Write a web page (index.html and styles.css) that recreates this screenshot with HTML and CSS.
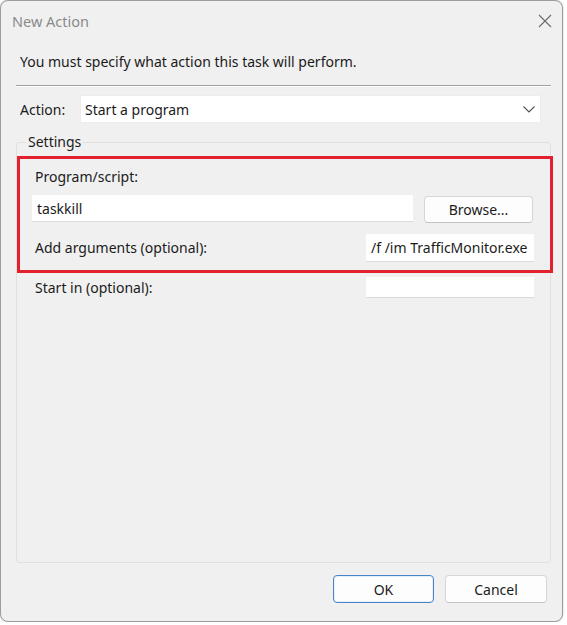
FILE: index.html
```html
<!DOCTYPE html>
<html>
<head>
    <title>New Action</title>
    <link rel="stylesheet" href="styles.css">
</head>
<body>
    <div class="window">
        <div class="titlebar">
            <span class="title">New Action</span>
            <svg class="close" width="14" height="14" viewBox="0 0 14 14">
                <path d="M1 1 L13 13 M13 1 L1 13" stroke="#6a6a6a" stroke-width="1.1" fill="none"/>
            </svg>
        </div>

        <div class="content">
            <div class="instruction">You must specify what action this task will perform.</div>
            <div class="separator"></div>

            <div class="action-row">
                <span class="action-label">Action:</span>
                <div class="combo">
                    <span>Start a program</span>
                    <svg width="12" height="7" viewBox="0 0 12 7">
                        <path d="M0.5 0.5 L6 6 L11.5 0.5" stroke="#555" stroke-width="1.1" fill="none"/>
                    </svg>
                </div>
            </div>

            <fieldset class="settings">
                <legend>Settings</legend>

                <!-- highlighted part -->
                <div class="highlight">
                    <div class="field-label first">Program/script:</div>
                    <div class="program-row">
                        <div class="input wide">taskkill</div>
                        <div class="btn browse">Browse...</div>
                    </div>
                    <div class="arg-row">
                        <span class="field-label">Add arguments (optional):</span>
                        <div class="input short">/f /im TrafficMonitor.exe</div>
                    </div>
                </div>

                <div class="start-row">
                    <span class="field-label">Start in (optional):</span>
                    <div class="input short small"></div>
                </div>
            </fieldset>
        </div>

        <div class="footer">
            <div class="btn ok">OK</div>
            <div class="btn">Cancel</div>
        </div>
    </div>
</body>
</html>
```

FILE: styles.css
```css
* {
    box-sizing: border-box;
}
body {
    margin: 0;
    background: #ffffff;
    font-family: "Noto Sans", "Open Sans", sans-serif;
    font-size: 14px;
    color: #1b1b1b;
}
.window {
    width: 563px;
    height: 622px;
    border: 1px solid #9c9c9c;
    border-radius: 8px;
    background: #f0f0f0;
    box-shadow: 0 0 2px rgba(0, 0, 0, 0.25);
    display: flex;
    flex-direction: column;
    overflow: hidden;
}
.titlebar {
    height: 39px;
    flex: none;
    display: flex;
    align-items: center;
    justify-content: space-between;
    padding: 0 10px 0 11px;
}
.title {
    color: #8a8a8a;
    font-size: 14.5px;
}
.close {
    margin-top: 1px;
}
.content {
    flex: 1;
    display: flex;
    flex-direction: column;
    padding: 0 11px 0 15px;
}
.instruction {
    margin: 12px 0 0 4px;
    line-height: 20px;
}
.separator {
    margin-top: 13px;
    border-top: 1px solid #a0a0a0;
    border-bottom: 1px solid #ffffff;
}
.action-row {
    display: flex;
    align-items: center;
    margin: 8px 10px 0 4px;
}
.action-label {
    width: 60px;
}
.combo {
    flex: 1;
    height: 28px;
    background: #ffffff;
    border: 1px solid #ececec;
    display: flex;
    align-items: center;
    justify-content: space-between;
    padding: 0 5px 0 4px;
}
.settings {
    flex: 1;
    margin: 9px 0 0 0;
    padding: 0;
    border: 1px solid #e0e0e0;
    border-radius: 3px;
    display: flex;
    flex-direction: column;
}
.settings legend {
    margin-left: 9px;
    padding: 0 2px;
    line-height: 20px;
}
.highlight {
    margin: 4px -3px 0 0;
    border: 3px solid #e3202e;
    padding: 0 16px 8px 12px;
}
.field-label {
    margin-left: 3px;
    line-height: 20px;
}
.field-label.first {
    margin-top: 8px;
}
.input {
    height: 27px;
    background: #ffffff;
    border-bottom: 1px solid #dadada;
    padding: 0 5px;
    display: flex;
    align-items: center;
    white-space: nowrap;
    overflow: hidden;
}
.program-row {
    display: flex;
    margin-top: 8px;
    gap: 11px;
}
.input.wide {
    flex: 1;
}
.btn {
    height: 28px;
    display: flex;
    align-items: center;
    justify-content: center;
    background: #fdfdfd;
    border: 1px solid #d6d6d6;
    border-bottom-color: #c4c4c4;
    border-radius: 4px;
}
.browse {
    width: 109px;
    height: 27px;
    margin: 1px 1px 0 0;
}
.arg-row,
.start-row {
    display: flex;
    align-items: center;
    justify-content: space-between;
}
.arg-row {
    margin-top: 11px;
}
.input.short {
    width: 168px;
    height: 28px;
}
.start-row {
    margin: 4px 16px 0 18px;
}
.start-row .field-label {
    margin-left: 0;
}
.input.short.small {
    height: 21px;
}
.footer {
    flex: none;
    display: flex;
    justify-content: flex-end;
    gap: 11px;
    padding: 12px 15px 18px 0;
}
.footer .btn {
    width: 102px;
}
.btn.ok {
    width: 101px;
    border: 1px solid #4a84c6;
    box-shadow: inset 0 0 0 1px #e6eef8;
}
```
